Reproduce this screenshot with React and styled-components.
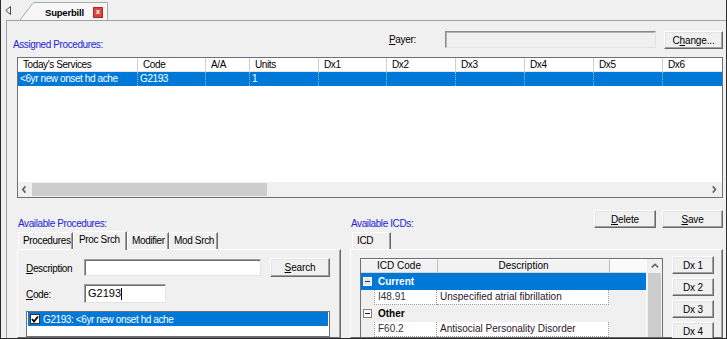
import React from 'react';
import styled, { createGlobalStyle } from 'styled-components';

const Global = createGlobalStyle`
  html, body { margin: 0; padding: 0; background: #f0f0f0; }
  body { font-family: "Liberation Sans", Arial, sans-serif; font-size: 10px; letter-spacing: -0.35px; color: #000; }
  * { box-sizing: border-box; }
`;

const Frame = styled.div`
  width: 727px;
  height: 339px;
  overflow: hidden;
  background: #f0f0f0;
  border-left: 1px solid #2b2b2b;
  border-right: 1px solid #2b2b2b;
  border-bottom: 1px solid #2b2b2b;
  display: flex;
  flex-direction: column;
`;

const TabStrip = styled.div`
  height: 20px;
  display: flex;
  align-items: flex-end;
  padding-left: 4px;
  flex: none;
`;

const StripArrow = styled.svg`
  width: 6px;
  height: 9px;
  align-self: flex-start;
  margin-top: 6px;
`;

const DocTab = styled.div`
  position: relative;
  margin-left: 9px;
  width: 89px;
  height: 18px;
  display: flex;
  align-items: center;
  padding-left: 25px;
  font-weight: bold;
  font-size: 9.5px;
  letter-spacing: -0.2px;
`;

const TabShape = styled.svg`
  position: absolute;
  left: 0;
  top: 0;
  width: 89px;
  height: 18px;
  z-index: 0;
`;

const DocTabLabel = styled.span`
  position: relative;
  z-index: 1;
  padding-top: 2px;
`;

const CloseBtn = styled.span`
  position: relative;
  z-index: 1;
  margin-left: 9px;
  margin-top: 2px;
  width: 10px;
  height: 11px;
  background: #d9443c;
  border: 1px solid #b02a22;
  color: #fff;
  font-size: 8px;
  line-height: 8px;
  text-align: center;
  font-weight: bold;
  letter-spacing: 0;
`;

const Panel = styled.div`
  flex: 1;
  margin-left: 5px;
  border-top: 1px solid #a0a0a0;
  border-left: 1px solid #a0a0a0;
  padding: 10px 3px 0 6px;
  display: flex;
  flex-direction: column;
  min-height: 0;
`;

const TopRow = styled.div`
  height: 18px;
  display: flex;
  align-items: flex-start;
  margin-bottom: 8px;
`;

const SectionLabel = styled.div`
  color: #2323d6;
  font-size: 10px;
  letter-spacing: -0.4px;
  line-height: 12px;
  margin-top: ${p => p.$mt || 0}px;
  padding-left: ${p => p.$pl || 0}px;
  white-space: nowrap;
`;

const PayerGroup = styled.div`
  margin-left: auto;
  display: flex;
  align-items: flex-start;
`;

const FieldLabel = styled.div`
  width: ${p => p.$w}px;
  line-height: 12px;
  padding-top: ${p => p.$pt || 3}px;
  white-space: nowrap;
`;

const TextBox = styled.div`
  width: ${p => p.$w}px;
  height: ${p => p.$h || 17}px;
  background: ${p => (p.$disabled ? '#f0f0f0' : '#fff')};
  border: 1px solid;
  border-color: ${p => (p.$disabled ? '#8a8a8a #e3e3e3 #e3e3e3 #8a8a8a' : '#a0a0a0 #e3e3e3 #e3e3e3 #a0a0a0')};
  box-shadow: ${p => (p.$disabled ? 'inset 1px 1px 0 #b4b4b4' : 'inset 1px 1px 0 #6d6d6d')};
  padding: 2px 3px;
  font-size: 11px;
  letter-spacing: 0;
  line-height: 13px;
  display: flex;
  align-items: center;
`;

const Caret = styled.span`
  display: inline-block;
  width: 1px;
  height: 12px;
  background: #000;
`;

const Button = styled.div`
  width: ${p => p.$w}px;
  height: ${p => p.$h || 18}px;
  margin-left: ${p => p.$ml || 0}px;
  background: #f0f0f0;
  border: 1px solid;
  border-color: #fff #696969 #696969 #fff;
  box-shadow: inset -1px -1px 0 #a0a0a0, inset 1px 1px 0 #e3e3e3;
  display: flex;
  align-items: center;
  justify-content: center;
  font-size: 10px;
  letter-spacing: -0.15px;
  white-space: nowrap;
  flex: none;
`;

const MainGrid = styled.div`
  margin-left: 4px;
  width: 706px;
  height: 141px;
  border: 1px solid #6e7077;
  background: #fff;
  display: flex;
  flex-direction: column;
  flex: none;
`;

const GridRow = styled.div`
  display: grid;
  grid-template-columns: 120px 68px 44px 69px 68px 69px 69px 69px 69px 1fr;
  height: 14px;
  background: ${p => (p.$selected ? '#0078d7' : '#fff')};
  color: ${p => (p.$selected ? '#fff' : '#000')};
  letter-spacing: -0.4px;
`;

const HeadCell = styled.div`
  border-right: 1px solid #d0d0d0;
  border-bottom: 1px solid #e5e5e5;
  padding-left: 5px;
  line-height: 13px;
  white-space: nowrap;
  overflow: hidden;
  &:last-child { border-right: none; }
`;

const RowCell = styled.div`
  border-right: 1px dotted rgba(255, 255, 255, 0.55);
  padding-left: 2px;
  line-height: 13px;
  white-space: nowrap;
  overflow: hidden;
  &:last-child { border-right: none; }
`;

const GridSpacer = styled.div`
  flex: 1;
`;

const HScroll = styled.div`
  height: 15px;
  background: #f0f0f0;
  display: flex;
  align-items: stretch;
  flex: none;
`;

const ScrollBtn = styled.div`
  width: ${p => p.$w || 14}px;
  height: ${p => p.$h || 15}px;
  display: flex;
  align-items: center;
  justify-content: center;
  flex: none;
`;

const HThumb = styled.div`
  width: 235px;
  margin: 1px 0;
  background: #cdcdcd;
`;

const Track = styled.div`
  flex: 1;
`;

const Bottom = styled.div`
  margin-left: 4px;
  margin-top: 12px;
  display: flex;
  flex: 1;
  min-height: 0;
`;

const Column = styled.div`
  width: ${p => (p.$w ? `${p.$w}px` : 'auto')};
  flex: ${p => (p.$w ? 'none' : '1')};
  display: flex;
  flex-direction: column;
`;

const ColHeader = styled.div`
  height: 20px;
  display: flex;
  align-items: flex-start;
`;

const TabRow = styled.div`
  height: 19px;
  display: flex;
  align-items: flex-end;
  padding-left: ${p => p.$pl}px;
`;

const FormTab = styled.div`
  width: ${p => p.$w}px;
  height: ${p => (p.$active ? 19 : 17)}px;
  border-top: 1px solid #fff;
  border-left: 1px solid #fff;
  border-right: 1px solid #696969;
  box-shadow: inset -1px 0 0 #a0a0a0;
  padding-left: ${p => (p.$active ? 5 : 4)}px;
  line-height: ${p => (p.$active ? 16 : 15)}px;
  font-size: 10px;
  white-space: nowrap;
  background: #f0f0f0;
  position: relative;
  z-index: ${p => (p.$active ? 1 : 0)};
  margin-bottom: ${p => (p.$active ? -1 : 0)}px;
`;

const TabBody = styled.div`
  width: ${p => (p.$w ? `${p.$w}px` : 'auto')};
  margin-left: ${p => p.$ml || 0}px;
  flex: 1;
  border: 1px solid;
  border-color: #fff #696969 #696969 #fff;
  box-shadow: inset -1px 0 0 #a0a0a0;
  padding: 8px 0 0 ${p => p.$pl}px;
  display: flex;
  flex-direction: ${p => p.$dir || 'column'};
  min-height: 0;
`;

const FormRow = styled.div`
  display: flex;
  align-items: center;
  height: 19px;
  margin-top: ${p => p.$mt || 0}px;
`;

const ListBox = styled.div`
  margin-top: 8px;
  width: 304px;
  flex: 1;
  border: 1px solid #6e7077;
  background: #fff;
  padding: 0 1px;
`;

const ListItem = styled.div`
  height: 14px;
  background: #0078d7;
  color: #fff;
  display: flex;
  align-items: center;
  font-size: 10px;
  letter-spacing: -0.4px;
  padding-left: 2px;
`;

const CheckBox = styled.span`
  width: 10px;
  height: 10px;
  background: #fff;
  border: 1px solid #333;
  margin-right: 3px;
  display: flex;
  align-items: center;
  justify-content: center;
`;

const HeaderButtons = styled.div`
  margin-left: auto;
  display: flex;
`;

const IcdGrid = styled.div`
  width: 303px;
  border: 1px solid #6e7077;
  border-bottom: none;
  background: #f0f0f0;
  display: flex;
  flex: none;
  letter-spacing: 0;
`;

const IcdBody = styled.div`
  flex: 1;
  display: flex;
  flex-direction: column;
`;

const IcdHeadRow = styled.div`
  display: grid;
  grid-template-columns: 77px 172px 1fr;
  height: 14px;
  background: #fff;
`;

const IcdHeadCell = styled.div`
  background: ${p => (p.$blank ? '#fafafa' : '#f2f2f2')};
  border-right: 1px solid ${p => (p.$blank ? 'transparent' : '#bdbdbd')};
  border-bottom: 1px solid #d5d5d5;
  border-top: 1px solid #fff;
  text-align: center;
  line-height: 12px;
  font-size: 10px;
`;

const GroupRow = styled.div`
  height: 18px;
  display: flex;
  align-items: center;
  padding-left: 2px;
  font-weight: bold;
  font-size: 10px;
  background: ${p => (p.$selected ? '#0078d7' : '#f0f0f0')};
  color: ${p => (p.$selected ? '#fff' : '#000')};
`;

const Expander = styled.span`
  width: 9px;
  height: 9px;
  border: 1px solid ${p => (p.$selected ? '#fff' : '#808080')};
  background: ${p => (p.$selected ? '#e8e8e8' : '#fff')};
  margin-right: 6px;
  display: flex;
  align-items: center;
  justify-content: center;
  &::after {
    content: '';
    width: 5px;
    height: 1px;
    background: ${p => (p.$selected ? '#333' : '#222')};
  }
`;

const DataRow = styled.div`
  display: grid;
  grid-template-columns: 13px 63px 172px 1fr;
  height: 15px;
`;

const DataCell = styled.div`
  background: ${p => (p.$fill ? '#fff' : 'transparent')};
  border-right: ${p => (p.$fill ? '1px dotted #9a9a9a' : 'none')};
  border-bottom: ${p => (p.$fill ? '1px dotted #9a9a9a' : 'none')};
  border-left: ${p => (p.$first ? '1px dotted #9a9a9a' : 'none')};
  padding-left: 3px;
  line-height: 14px;
  font-size: 10px;
  color: ${p => p.$color || '#222'};
  white-space: nowrap;
  overflow: hidden;
`;

const VScroll = styled.div`
  width: 16px;
  background: #f0f0f0;
  display: flex;
  flex-direction: column;
  align-items: center;
  border-left: 1px solid #fafafa;
`;

const VThumb = styled.div`
  width: 13px;
  flex: 1;
  background: #cdcdcd;
`;

const DxColumn = styled.div`
  margin-left: 9px;
  margin-top: -2px;
  display: flex;
  flex-direction: column;
  gap: 4px;
`;

const Chevron = ({ dir }) => {
  const pts = {
    left: '5,1 2,4.5 5,8',
    right: '2,1 5,4.5 2,8',
    up: '1,5.5 4.5,2 8,5.5',
  }[dir];
  return (
    <svg width="8" height="9" viewBox="0 0 9 9">
      <polyline points={pts} fill="none" stroke="#606060" strokeWidth="1.8" />
    </svg>
  );
};

const cols = ["Today's Services", 'Code', 'A/A', 'Units', 'Dx1', 'Dx2', 'Dx3', 'Dx4', 'Dx5', 'Dx6'];
const rowVals = ['<6yr new onset hd ache', 'G2193', '', '1', '', '', '', '', '', ''];

export default function App() {
  return (
    <>
      <Global />
      <Frame>
        <TabStrip>
          <StripArrow viewBox="0 0 6 9">
            <polygon points="5.5,0.5 0.8,4.5 5.5,8.5" fill="#fff" stroke="#444" strokeWidth="1" />
          </StripArrow>
          <DocTab>
            <TabShape viewBox="0 0 89 18">
              <path d="M0 18 L12.5 1.8 Q13.5 0.5 15 0.5 L87.5 0.5 L87.5 18" fill="#f7f7f7" stroke="#a8a8a8" strokeWidth="1" />
            </TabShape>
            <DocTabLabel>Superbill</DocTabLabel>
            <CloseBtn>x</CloseBtn>
          </DocTab>
        </TabStrip>
        <Panel>
          <TopRow>
            <SectionLabel $mt={8}>Assigned Procedures:</SectionLabel>
            <PayerGroup>
              <FieldLabel $w={56}><u>P</u>ayer:</FieldLabel>
              <TextBox $w={211} $disabled />
              <Button $w={59} $ml={8}>C<u>h</u>ange...</Button>
            </PayerGroup>
          </TopRow>
          <MainGrid>
            <GridRow>
              {cols.map(c => <HeadCell key={c}>{c}</HeadCell>)}
            </GridRow>
            <GridRow $selected>
              {rowVals.map((v, i) => <RowCell key={i}>{v}</RowCell>)}
            </GridRow>
            <GridSpacer />
            <HScroll>
              <ScrollBtn><Chevron dir="left" /></ScrollBtn>
              <HThumb />
              <Track />
              <ScrollBtn><Chevron dir="right" /></ScrollBtn>
            </HScroll>
          </MainGrid>
          <Bottom>
            <Column $w={327}>
              <ColHeader>
                <SectionLabel $mt={8} $pl={1}>Available Procedures:</SectionLabel>
              </ColHeader>
              <TabRow $pl={1}>
                <FormTab $w={55}>Procedures</FormTab>
                <FormTab $w={54} $active>Proc Srch</FormTab>
                <FormTab $w={42}>Modifier</FormTab>
                <FormTab $w={49}>Mod Srch</FormTab>
              </TabRow>
              <TabBody $w={324} $pl={8}>
                <FormRow>
                  <FieldLabel $w={58} $pt={0}><u>D</u>escription</FieldLabel>
                  <TextBox $w={177} />
                  <Button $w={60} $h={19} $ml={9}><u>S</u>earch</Button>
                </FormRow>
                <FormRow $mt={7}>
                  <FieldLabel $w={58} $pt={0}><u>C</u>ode:</FieldLabel>
                  <TextBox $w={82} $h={19}>G2193<Caret /></TextBox>
                </FormRow>
                <ListBox>
                  <ListItem>
                    <CheckBox>
                      <svg width="8" height="8" viewBox="0 0 8 8">
                        <polyline points="1,4 3,6.5 7,1.5" fill="none" stroke="#000" strokeWidth="1.8" />
                      </svg>
                    </CheckBox>
                    G2193: &lt;6yr new onset hd ache
                  </ListItem>
                </ListBox>
              </TabBody>
            </Column>
            <Column>
              <ColHeader>
                <SectionLabel $mt={8} $pl={7}>Available ICDs:</SectionLabel>
                <HeaderButtons>
                  <Button $w={62}><u>D</u>elete</Button>
                  <Button $w={61} $ml={6}><u>S</u>ave</Button>
                </HeaderButtons>
              </ColHeader>
              <TabRow $pl={8}>
                <FormTab $w={39}>ICD</FormTab>
              </TabRow>
              <TabBody $ml={6} $pl={9} $dir="row">
                <IcdGrid>
                  <IcdBody>
                    <IcdHeadRow>
                      <IcdHeadCell>ICD Code</IcdHeadCell>
                      <IcdHeadCell>Description</IcdHeadCell>
                      <IcdHeadCell $blank />
                    </IcdHeadRow>
                    <GroupRow $selected><Expander $selected />Current</GroupRow>
                    <DataRow>
                      <DataCell />
                      <DataCell $fill $first $color="#333">I48.91</DataCell>
                      <DataCell $fill $color="#2a142a">Unspecified atrial fibrillation</DataCell>
                      <DataCell />
                    </DataRow>
                    <GroupRow><Expander />Other</GroupRow>
                    <DataRow>
                      <DataCell />
                      <DataCell $fill $first $color="#333">F60.2</DataCell>
                      <DataCell $fill $color="#2a142a">Antisocial Personality Disorder</DataCell>
                      <DataCell />
                    </DataRow>
                  </IcdBody>
                  <VScroll>
                    <ScrollBtn $w={16} $h={14}><Chevron dir="up" /></ScrollBtn>
                    <VThumb />
                  </VScroll>
                </IcdGrid>
                <DxColumn>
                  <Button $w={42}>Dx 1</Button>
                  <Button $w={42}>Dx 2</Button>
                  <Button $w={42}>Dx 3</Button>
                  <Button $w={42}>Dx 4</Button>
                </DxColumn>
              </TabBody>
            </Column>
          </Bottom>
        </Panel>
      </Frame>
    </>
  );
}
